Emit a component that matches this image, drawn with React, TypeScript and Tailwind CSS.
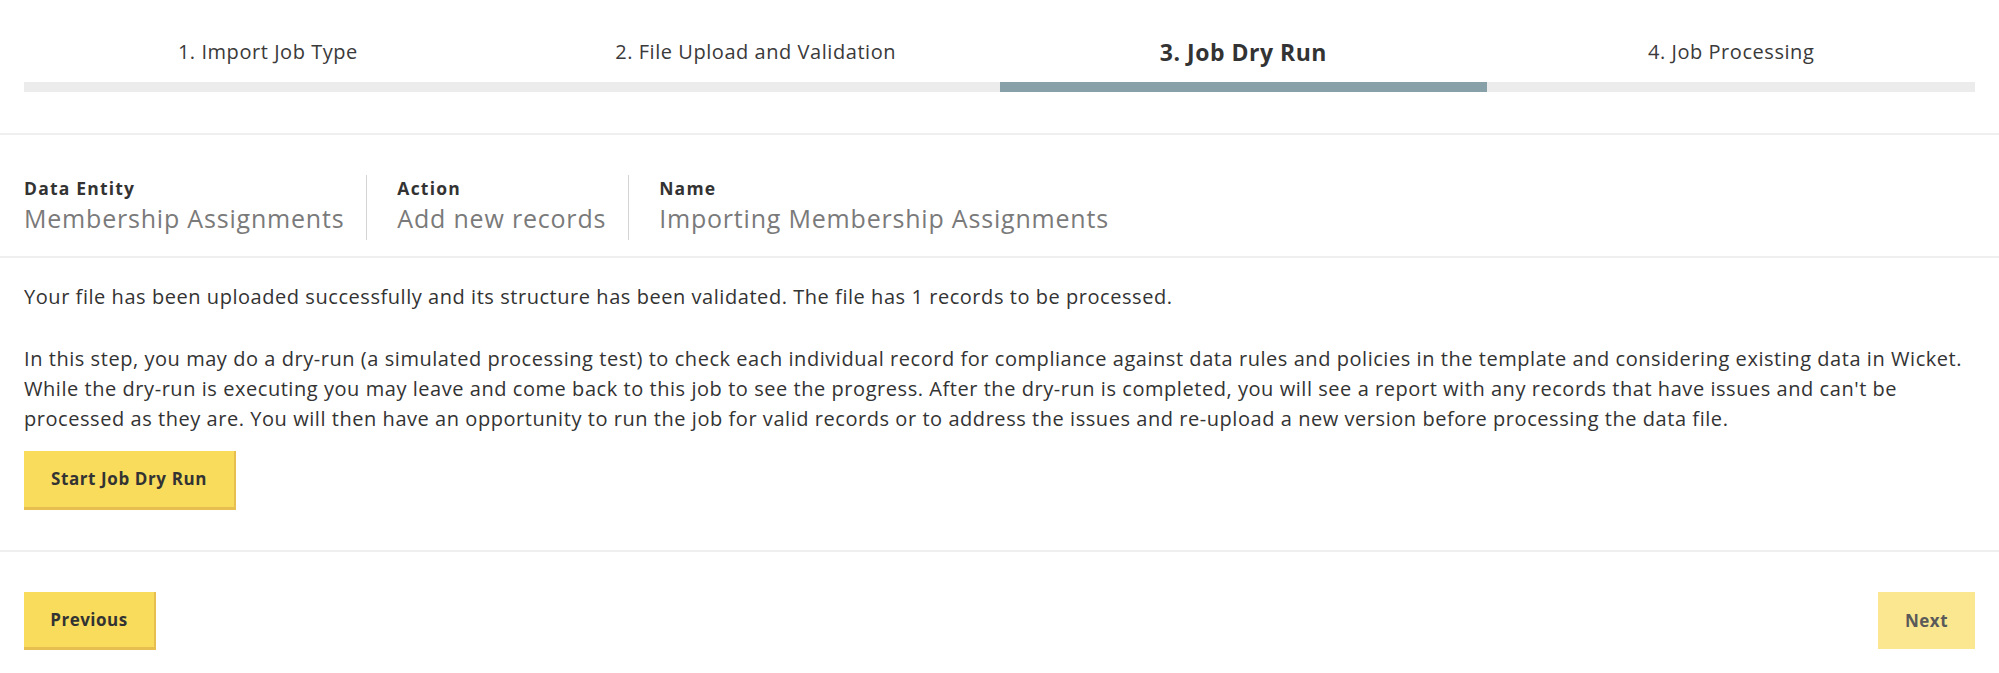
import React from "react";

const steps = [
  { label: "1. Import Job Type", active: false },
  { label: "2. File Upload and Validation", active: false },
  { label: "3. Job Dry Run", active: true },
  { label: "4. Job Processing", active: false },
];

export default function App() {
  return (
    <div className="w-full bg-white text-[#333333] font-['Open_Sans','Liberation_Sans',sans-serif]">
      {/* Stepper */}
      <div className="px-[24px] pt-[37px] pb-[41px] border-b-2 border-[#efefef]">
        <div className="grid grid-cols-4">
          {steps.map((s) => (
            <div key={s.label} className="flex flex-col">
              <div
                className={
                  s.active
                    ? "h-[30px] flex items-center justify-center text-[23px] tracking-[0.5px] font-bold text-[#333333]"
                    : "h-[30px] flex items-center justify-center text-[20px] tracking-[0.55px] text-[#3a3a3a]"
                }
              >
                {s.label}
              </div>
              <div
                className={
                  s.active
                    ? "mt-[15px] h-[10px] bg-[#88a1a8]"
                    : "mt-[15px] h-[10px] bg-[#ececec]"
                }
              />
            </div>
          ))}
        </div>
      </div>

      {/* Job info */}
      <div className="px-[24px] pt-[40px] pb-[16px] border-b-2 border-[#efefef] flex">
        <div className="h-[65px] pt-[2px] pr-[22px] border-r border-[#d4d4d4] flex flex-col">
          <div className="text-[17.5px] leading-[22px] tracking-[1.2px] font-bold text-[#333333]">Data Entity</div>
          <div className="mt-[3px] text-[25px] leading-[32px] tracking-[0.8px] text-[#7a7a7a]">Membership Assignments</div>
        </div>
        <div className="h-[65px] pt-[2px] pl-[30px] pr-[22px] border-r border-[#d4d4d4] flex flex-col">
          <div className="text-[17.5px] leading-[22px] tracking-[1.2px] font-bold text-[#333333]">Action</div>
          <div className="mt-[3px] text-[25px] leading-[32px] tracking-[0.8px] text-[#7a7a7a]">Add new records</div>
        </div>
        <div className="h-[65px] pt-[2px] pl-[30px] flex flex-col">
          <div className="text-[17.5px] leading-[22px] tracking-[1.2px] font-bold text-[#333333]">Name</div>
          <div className="mt-[3px] text-[25px] leading-[32px] tracking-[0.8px] text-[#7a7a7a]">Importing Membership Assignments</div>
        </div>
      </div>

      {/* Body */}
      <div className="px-[24px] pt-[24px] pb-[40px] border-b-2 border-[#efefef]">
        <p className="text-[20px] leading-[30px] tracking-[0.55px]">
          Your file has been uploaded successfully and its structure has been validated. The file has 1 records to be processed.
        </p>
        <p className="mt-[32px] text-[20px] leading-[30px] tracking-[0.55px]">
          In this step, you may do a dry-run (a simulated processing test) to check each individual record for compliance against data rules and policies in the template and considering existing data in Wicket.
          <br />
          While the dry-run is executing you may leave and come back to this job to see the progress. After the dry-run is completed, you will see a report with any records that have issues and can't be
          <br />
          processed as they are. You will then have an opportunity to run the job for valid records or to address the issues and re-upload a new version before processing the data file.
        </p>
        <button className="mt-[17px] w-[212px] h-[59px] bg-[#f9dc5c] border-r-2 border-b-[3px] border-[#e6bf50] text-[17px] tracking-[0.6px] font-bold text-[#333333] flex items-center justify-center">
          Start Job Dry Run
        </button>
      </div>

      {/* Footer */}
      <div className="px-[24px] pt-[40px] pb-[23px] flex justify-between">
        <button className="w-[132px] h-[58px] bg-[#f9dc5c] border-r-2 border-b-[3px] border-[#e6bf50] text-[17px] tracking-[0.5px] font-bold text-[#333333] flex items-center justify-center">
          Previous
        </button>
        <button className="w-[97px] h-[57px] bg-[#fbe78f] text-[17px] tracking-[0.5px] font-bold text-[#5a5a5a] flex items-center justify-center">
          Next
        </button>
      </div>
    </div>
  );
}
